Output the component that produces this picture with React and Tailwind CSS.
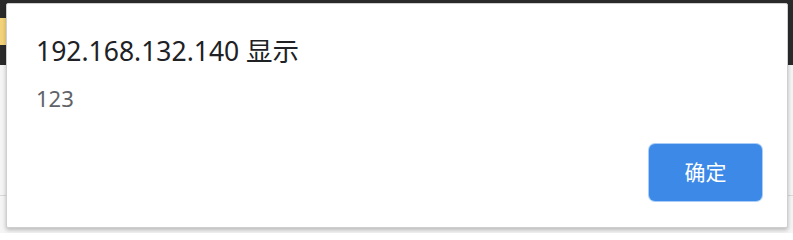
import React from "react";

export default function App() {
  return (
    <div
      className="relative w-[793px] h-[233px] overflow-hidden bg-[#f5f5f5]"
      style={{ fontFamily: '"Noto Sans", "Noto Sans CJK SC", sans-serif' }}
    >
      <div className="h-[65px] bg-[#2b2b2b] flex flex-col">
        <div className="mt-[18px] h-[27px] w-[10px] bg-[#f3d37a]" />
      </div>
      <div className="h-px bg-[#d9d9d9] mt-[130px]" />

      <div className="absolute left-[6px] top-[3px] w-[782px] h-[225px] bg-white border border-[#cfcfcf] rounded-[2px] shadow-[0_2px_4px_rgba(0,0,0,0.25)] flex flex-col">
        <div className="pl-[29px] pt-[29px] text-[26.5px] leading-[36px] text-[#202124]">
          192.168.132.140 显示
        </div>
        <div className="pl-[29px] mt-[15px] text-[22px] leading-[28px] text-[#5f6368]">
          123
        </div>
        <div className="mt-auto flex justify-end pr-[25px] pb-[26px]">
          <button className="w-[113px] h-[57px] rounded-[6px] bg-[#3c89e8] text-white text-[21px] ring-1 ring-[#a9cdf7] flex items-center justify-center">
            确定
          </button>
        </div>
      </div>
    </div>
  );
}
